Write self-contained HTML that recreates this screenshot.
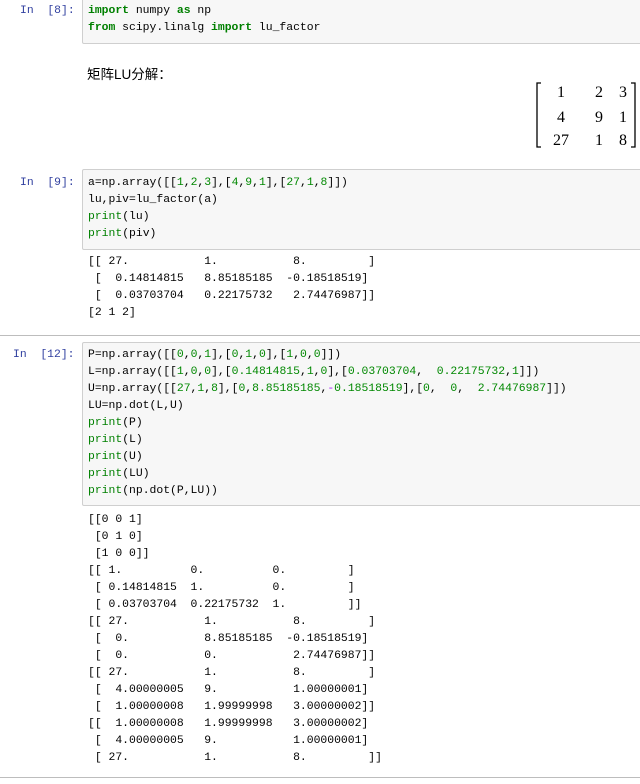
<!DOCTYPE html>
<html><head><meta charset="utf-8"><style>
body{margin:0;width:640px;height:784px;background:#fff;position:relative;overflow:hidden;font-family:"Liberation Mono","Noto Sans CJK SC",monospace;font-size:11.4px;color:#000}
.box{position:absolute;left:82px;right:-2px;background:#f7f7f7;border:1px solid #cfcfcf;border-radius:2px}
.l{position:absolute;left:88px;white-space:pre;line-height:17px}
.p{position:absolute;white-space:pre;color:#303F9F;line-height:17px}
.k{color:#008000;font-weight:bold}
.g{color:#008000}
.n{color:#080}
.hr{position:absolute;left:0;right:0;height:1px;background:#bdbdbd}
</style></head><body>
<div class="box" style="top:-2px;height:44px"></div>
<div class="p" style="left:20px;top:3px">In  [8]:</div>
<div class="l" style="top:3px"><span class="k">import</span> numpy <span class="k">as</span> np</div>
<div class="l" style="top:20px"><span class="k">from</span> scipy.linalg <span class="k">import</span> lu_factor</div>
<div style="position:absolute;left:87px;top:63px;font-family:'Liberation Sans','Noto Sans CJK SC',sans-serif;font-size:13.5px">矩阵LU分解：</div>
<svg style="position:absolute;left:535px;top:80px" width="102" height="70">
<path d="M6 3H2V67H6M96 3H100V67H96" fill="none" stroke="#000" stroke-width="1.3"/>
<g font-family="Liberation Serif,serif" font-size="16" text-anchor="middle">
<text x="26" y="17">1</text><text x="64" y="17">2</text><text x="88" y="17">3</text>
<text x="26" y="42">4</text><text x="64" y="42">9</text><text x="88" y="42">1</text>
<text x="26" y="65">27</text><text x="64" y="65">1</text><text x="88" y="65">8</text></g></svg>

<div class="box" style="top:169px;height:79px"></div>
<div class="p" style="left:20px;top:175px">In  [9]:</div>
<div class="l" style="top:175px">a=np.array([[<span class="n">1</span>,<span class="n">2</span>,<span class="n">3</span>],[<span class="n">4</span>,<span class="n">9</span>,<span class="n">1</span>],[<span class="n">27</span>,<span class="n">1</span>,<span class="n">8</span>]])</div>
<div class="l" style="top:192px">lu,piv=lu_factor(a)</div>
<div class="l" style="top:209px"><span class="g">print</span>(lu)</div>
<div class="l" style="top:226px"><span class="g">print</span>(piv)</div>
<div class="l" style="top:254px">[[ 27.           1.           8.         ]
 [  0.14814815   8.85185185  -0.18518519]
 [  0.03703704   0.22175732   2.74476987]]
[2 1 2]</div>
<div class="hr" style="top:335px"></div>

<div class="box" style="top:342px;height:162px"></div>
<div class="p" style="left:13px;top:347px">In  [12]:</div>
<div class="l" style="top:347px">P=np.array([[<span class="n">0</span>,<span class="n">0</span>,<span class="n">1</span>],[<span class="n">0</span>,<span class="n">1</span>,<span class="n">0</span>],[<span class="n">1</span>,<span class="n">0</span>,<span class="n">0</span>]])
L=np.array([[<span class="n">1</span>,<span class="n">0</span>,<span class="n">0</span>],[<span class="n">0.14814815</span>,<span class="n">1</span>,<span class="n">0</span>],[<span class="n">0.03703704</span>,  <span class="n">0.22175732</span>,<span class="n">1</span>]])
U=np.array([[<span class="n">27</span>,<span class="n">1</span>,<span class="n">8</span>],[<span class="n">0</span>,<span class="n">8.85185185</span>,<span style="color:#a2f">-</span><span class="n">0.18518519</span>],[<span class="n">0</span>,  <span class="n">0</span>,  <span class="n">2.74476987</span>]])
LU=np.dot(L,U)
<span class="g">print</span>(P)
<span class="g">print</span>(L)
<span class="g">print</span>(U)
<span class="g">print</span>(LU)
<span class="g">print</span>(np.dot(P,LU))</div>
<div class="l" style="top:512px">[[0 0 1]
 [0 1 0]
 [1 0 0]]
[[ 1.          0.          0.         ]
 [ 0.14814815  1.          0.         ]
 [ 0.03703704  0.22175732  1.         ]]
[[ 27.           1.           8.         ]
 [  0.           8.85185185  -0.18518519]
 [  0.           0.           2.74476987]]
[[ 27.           1.           8.         ]
 [  4.00000005   9.           1.00000001]
 [  1.00000008   1.99999998   3.00000002]]
[[  1.00000008   1.99999998   3.00000002]
 [  4.00000005   9.           1.00000001]
 [ 27.           1.           8.         ]]</div>
<div class="hr" style="top:777px"></div>
</body></html>
